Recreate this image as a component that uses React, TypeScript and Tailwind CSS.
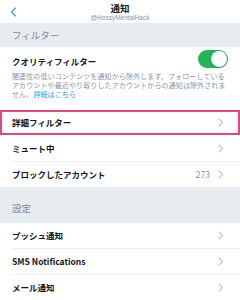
import React from "react";

const font = { fontFamily: '"Noto Sans CJK JP", "Noto Sans", sans-serif' };

function Chevron() {
  return (
    <svg width="6" height="9" viewBox="0 0 6 9" fill="none">
      <path d="M1 1l3.5 3.5L1 8" stroke="#c4c9cf" strokeWidth="1.1" strokeLinecap="round" strokeLinejoin="round" />
    </svg>
  );
}

function Row({ label, value, last }: { label: string; value?: string; last?: boolean }) {
  return (
    <div className="flex flex-col">
      <div className="flex h-[25px] items-center justify-between pl-3 pr-[16px]">
        <span className="text-[8.5px] font-bold text-[#14171a]">{label}</span>
        <div className="flex items-center gap-[8px]">
          {value && <span className="text-[8.5px] text-[#8a96a3]">{value}</span>}
          <Chevron />
        </div>
      </div>
      {!last && <div className="ml-3 h-px bg-[#eceff2]" />}
    </div>
  );
}

export default function App() {
  return (
    <div className="flex h-[300px] w-[240px] flex-col overflow-hidden bg-[#e6ecf0]" style={font}>
      {/* header */}
      <div className="relative flex h-[24px] flex-col items-center bg-white">
        <svg className="absolute left-[10px] top-[7px]" width="7" height="10" viewBox="0 0 7 10" fill="none">
          <path d="M5.5 1L1.5 5l4 4" stroke="#3a9ad9" strokeWidth="1.1" strokeLinecap="round" strokeLinejoin="round" />
        </svg>
        <span className="mt-[2px] text-[9.5px] font-bold leading-[12px] text-[#14171a]">通知</span>
        <span className="text-[6.5px] leading-[8px] text-[#8a96a3]" style={{ fontFamily: '"Liberation Sans", sans-serif' }}>
          @HossyMentalHack
        </span>
      </div>
      {/* section filter */}
      <div className="flex h-[25px] items-center px-3">
        <span className="text-[9.5px] text-[#7d8a96]">フィルター</span>
      </div>
      {/* quality */}
      <div className="flex flex-col bg-white">
        <div className="flex flex-col px-3 pb-[11px] pt-[3px]">
          <div className="flex items-start justify-between">
            <span className="pt-[4px] text-[8.5px] font-bold leading-[14px] text-[#14171a]">クオリティフィルター</span>
            <div className="flex h-[18px] w-[30px] items-center justify-end rounded-full bg-[#22b557] pr-[1px]">
              <div className="h-[16px] w-[16px] rounded-full bg-white shadow-[0_1px_2px_rgba(0,0,0,0.25)]" />
            </div>
          </div>
          <p className="mt-[4px] text-[7px] leading-[9px] tracking-[0.12px] text-[#8a96a3]">
            関連性の低いコンテンツを通知から除外します。フォローしているアカウントや最近やり取りしたアカウントからの通知は除外されません。
            <span className="text-[#2b9be4]">詳細はこちら</span>
          </p>
        </div>
        {/* detailed filter highlighted */}
        <div className="flex h-[25px] items-center justify-between border-2 border-[#e8457c] pl-[10px] pr-[14px]">
          <span className="text-[8.5px] font-bold text-[#14171a]">詳細フィルター</span>
          <Chevron />
        </div>
        <div className="h-px" />
        <Row label="ミュート中" />
        <Row label="ブロックしたアカウント" value="273" last />
      </div>
      {/* section settings */}
      <div className="flex h-[37px] items-end px-3 pb-[8px]">
        <span className="text-[9.5px] text-[#7d8a96]">設定</span>
      </div>
      <div className="flex flex-col bg-white">
        <Row label="プッシュ通知" />
        <Row label="SMS Notifications" />
        <Row label="メール通知" last />
      </div>
    </div>
  );
}
